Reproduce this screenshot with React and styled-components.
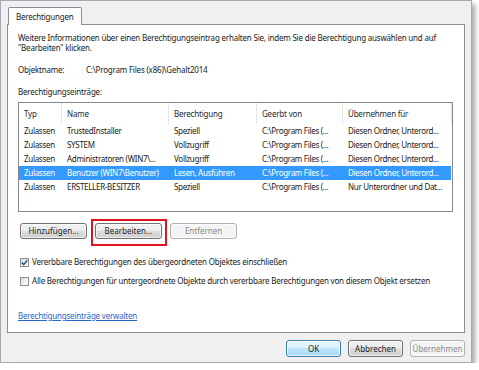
import React from "react";
import styled, { createGlobalStyle } from "styled-components";

const Global = createGlobalStyle`
  html, body { margin: 0; padding: 0; background: #ffffff; }
  body {
    font-family: "Noto Sans", "Open Sans", sans-serif;
    font-size: 8px;
    line-height: 10px;
    letter-spacing: -0.2px;
    color: #1a1a1a;
  }
  * { box-sizing: border-box; }
`;

const Window = styled.div`
  width: 472px;
  height: 363px;
  border: 1px solid #a3a9b0;
  background: #f0f0f0;
  box-shadow: 3px 4px 5px rgba(0, 0, 0, 0.35);
  display: flex;
  flex-direction: column;
  padding: 6px 6px 0 6px;
`;

const TabRow = styled.div`
  display: flex;
  height: 17px;
  padding-left: 1px;
`;

const Tab = styled.div`
  position: relative;
  z-index: 1;
  height: 18px;
  padding: 0 7px;
  display: flex;
  align-items: center;
  background: #ffffff;
  border: 1px solid #898c95;
  border-bottom: none;
  border-radius: 2px 2px 0 0;
`;

const Panel = styled.div`
  flex: 1;
  background: #ffffff;
  border: 1px solid #898c95;
  padding: 8px 10px 0 10px;
  display: flex;
  flex-direction: column;
`;

const Para = styled.p`
  margin: 0;
  white-space: pre-line;
`;

const InfoRow = styled.div`
  margin-top: ${(p) => p.$mt}px;
  display: flex;
  height: 10px;
`;

const InfoLabel = styled.span`
  width: 68px;
`;

const Label = styled.div`
  margin-top: 12px;
  height: 10px;
`;

const List = styled.div`
  margin-top: 5px;
  height: 110px;
  width: 435px;
  border: 1px solid #828790;
  display: flex;
  flex-direction: column;
  padding-right: 1px;
`;

const Grid = styled.div`
  display: grid;
  grid-template-columns: 43px 107px 88px 86px 109px;
`;

const Header = styled(Grid)`
  height: 21px;
  align-items: stretch;
`;

const HeadCell = styled.div`
  display: flex;
  align-items: center;
  padding-left: 5px;
  border-right: 1px solid #e3e5e8;
  color: #1e2a3a;
`;

const Row = styled(Grid)`
  height: 14px;
  align-items: center;
  background: ${(p) => (p.$selected ? "#3399ff" : "transparent")};
  color: ${(p) => (p.$selected ? "#ffffff" : "#1a1a1a")};
`;

const Cell = styled.div`
  padding-left: 5px;
  white-space: nowrap;
  overflow: hidden;
  letter-spacing: -0.3px;
`;

const ButtonRow = styled.div`
  margin-top: 11px;
  display: flex;
  align-items: flex-start;
  padding-left: 2px;
  gap: 3px;
`;

const Button = styled.button`
  width: ${(p) => p.$w || 67}px;
  height: ${(p) => p.$h || 16}px;
  padding: 0;
  font: inherit;
  border-radius: 3px;
  border: 1px solid ${(p) => (p.$disabled ? "#adb2b5" : p.$default ? "#3c7fb1" : "#707070")};
  color: ${(p) => (p.$disabled ? "#8a8a8a" : "#1a1a1a")};
  background: ${(p) =>
    p.$disabled
      ? "#f4f4f4"
      : p.$default
      ? "linear-gradient(#eaf6fd 0%, #d9f0fc 50%, #bee6fd 50%, #a7d9f5 100%)"
      : "linear-gradient(#f2f2f2 0%, #ebebeb 50%, #dddddd 50%, #cfcfcf 100%)"};
  box-shadow: inset 0 0 0 1px rgba(255, 255, 255, 0.7);
`;

const Highlight = styled.div`
  display: flex;
  margin-top: -4px;
  border: 2px solid #e0141e;
  padding: 2px 3px 5px 2px;
  margin-left: 1px;
`;

const CheckRow = styled.label`
  margin-top: ${(p) => p.$mt}px;
  display: flex;
  align-items: center;
  gap: 3px;
  height: 10px;
  padding-left: 2px;
`;

const Box = styled.span`
  width: 9px;
  height: 9px;
  border: 1px solid #8f8f8f;
  background: linear-gradient(135deg, #dcdcdc, #ffffff);
  display: flex;
  align-items: center;
  justify-content: center;
`;

const Link = styled.a`
  margin-top: 25px;
  color: #2a66c8;
  text-decoration: underline;
  height: 10px;
  align-self: flex-start;
`;

const Footer = styled.div`
  height: 29px;
  display: flex;
  justify-content: flex-end;
  align-items: flex-start;
  padding-top: 7px;
  gap: 7px;
`;

const rows = [
  ["Zulassen", "TrustedInstaller", "Speziell", "C:\\Program Files (...", "Diesen Ordner, Unterord..."],
  ["Zulassen", "SYSTEM", "Vollzugriff", "C:\\Program Files (...", "Diesen Ordner, Unterord..."],
  ["Zulassen", "Administratoren (WIN7\\...", "Vollzugriff", "C:\\Program Files (...", "Diesen Ordner, Unterord..."],
  ["Zulassen", "Benutzer (WIN7\\Benutzer)", "Lesen, Ausführen", "C:\\Program Files (...", "Diesen Ordner, Unterord...", true],
  ["Zulassen", "ERSTELLER-BESITZER", "Speziell", "C:\\Program Files (...", "Nur Unterordner und Dat..."],
];

const Check = () => (
  <svg width="7" height="7" viewBox="0 0 7 7">
    <path d="M0.8 3.6 L2.7 5.6 L6.3 1.2" fill="none" stroke="#2b4f8a" strokeWidth="1.4" />
  </svg>
);

export default function App() {
  return (
    <>
      <Global />
      <Window>
        <TabRow>
          <Tab>Berechtigungen</Tab>
        </TabRow>
        <Panel>
          <Para>
            {"Weitere Informationen über einen Berechtigungseintrag erhalten Sie, indem Sie die Berechtigung auswählen und auf\n\"Bearbeiten\" klicken."}
          </Para>
          <InfoRow $mt={12}>
            <InfoLabel>Objektname:</InfoLabel>
            <span>C:\Program Files (x86)\Gehalt2014</span>
          </InfoRow>
          <Label>Berechtigungseinträge:</Label>
          <List>
            <Header>
              <HeadCell>Typ</HeadCell>
              <HeadCell>Name</HeadCell>
              <HeadCell>Berechtigung</HeadCell>
              <HeadCell>Geerbt von</HeadCell>
              <HeadCell>Übernehmen für</HeadCell>
            </Header>
            {rows.map((r, i) => (
              <Row key={i} $selected={r[5]}>
                <Cell>{r[0]}</Cell>
                <Cell>{r[1]}</Cell>
                <Cell>{r[2]}</Cell>
                <Cell>{r[3]}</Cell>
                <Cell>{r[4]}</Cell>
              </Row>
            ))}
          </List>
          <ButtonRow>
            <Button>Hinzufügen...</Button>
            <Highlight>
              <Button>Bearbeiten...</Button>
            </Highlight>
            <Button $disabled disabled>Entfernen</Button>
          </ButtonRow>
          <CheckRow $mt={11}>
            <Box><Check /></Box>
            <span>Vererbbare Berechtigungen des übergeordneten Objektes einschließen</span>
          </CheckRow>
          <CheckRow $mt={9}>
            <Box />
            <span>Alle Berechtigungen für untergeordnete Objekte durch vererbbare Berechtigungen von diesem Objekt ersetzen</span>
          </CheckRow>
          <Link href="#">Berechtigungseinträge verwalten</Link>
        </Panel>
        <Footer>
          <Button $w={55} $h={17} $default>OK</Button>
          <Button $w={55} $h={17}>Abbrechen</Button>
          <Button $w={55} $h={17} $disabled disabled>Übernehmen</Button>
        </Footer>
      </Window>
    </>
  );
}
